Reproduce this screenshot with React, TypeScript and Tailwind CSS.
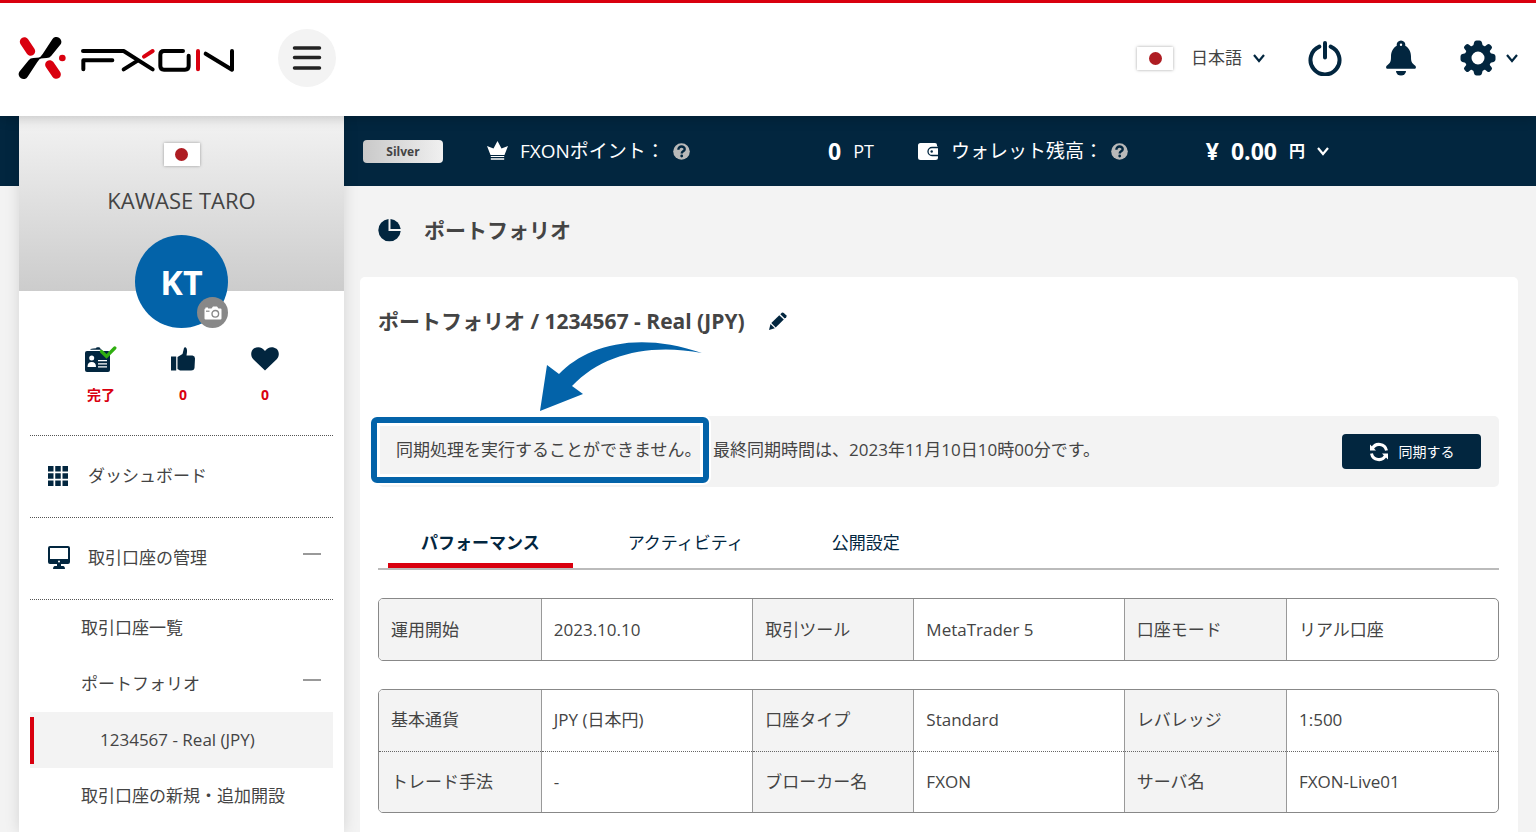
import { useState } from 'react';
import type { ReactNode } from 'react';

const Logo = () => (
  <svg viewBox="54 108 651 132" className="h-11 w-[217px]" aria-hidden="true">
    <g stroke="#d9000f" strokeWidth="27" strokeLinecap="round">
      <path d="M73 125L92 154M149 194L169 223" />
    </g>
    <circle cx="187" cy="174" r="10" fill="#d9000f" />
    <path
      id="logo-wing"
      d="M157 118L128 162Q122 172 112 176L140 174Q149 174 154 167L182 133A14 14 0 0 0 157 118Z"
    />
    <use href="#logo-wing" transform="rotate(180 120 174)" />
    <g fill="none" stroke="#000" strokeWidth="12" strokeLinecap="round" strokeLinejoin="round">
      <path d="M249 153H371L458 208M250 208V181H337M371 208L413 182" />
      <path d="M549 153H492Q481 153 481 164V198Q481 209 492 209H555Q566 209 566 198V167" />
      <path d="M617 161L696 209V153" />
      <path d="M594 153V208M432 170L458 153" stroke="#d9000f" />
    </g>
  </svg>
);

const Flag = () => (
  <span className="flex h-[23px] w-9 shrink-0 items-center justify-center bg-white shadow-[0_0_3px_rgba(0,0,0,0.35)]">
    <span className="size-[13px] rounded-full bg-[#ae1c22]" />
  </span>
);

const Chevron = () => (
  <svg viewBox="0 0 12 12" className="size-3 shrink-0" fill="none" stroke="currentColor" strokeWidth="2.2" aria-hidden="true">
    <path d="M1 3L6 9L11 3" />
  </svg>
);

const PowerIcon = () => (
  <svg viewBox="0 0 34 36" className="h-9 w-[34px]" fill="none" stroke="currentColor" strokeWidth="4" strokeLinecap="round" aria-hidden="true">
    <path d="M17 3V17.5M11.3 6.6A14.5 14.5 0 1 0 22.7 6.6" />
  </svg>
);

const BellIcon = () => (
  <svg viewBox="0 0 30 36" className="h-9 w-[30px]" fill="currentColor" aria-hidden="true">
    <path
      fillRule="evenodd"
      d="M15 .5a4.300 4.300 0 0 0-4.200 5.200C7.300 7.500 5 11.500 5 16.500c0 5-.6 6.500-4.300 9.200-1 .8-.7 3 .3 3h28c1 0 1.300-2.200.3-3C25.600 23 25 21.500 25 16.500c0-5-2.300-9-5.800-10.800A4.300 4.300 0 0 0 15 .5zm0 3a1.200 1.200 0 1 1 0 2.400 1.200 1.200 0 0 1 0-2.400z"
    />
    <path d="M10 31h10a5 4.500 0 0 1-10 0z" />
  </svg>
);

const GearIcon = () => (
  <svg viewBox="-18 -18 36 36" className="size-9" aria-hidden="true">
    <circle r="10" fill="none" stroke="currentColor" strokeWidth="7" />
    <g fill="none" stroke="currentColor" strokeWidth="5" strokeLinejoin="round">
      <path d="M-1.500-15H1.500L2.500-11H-2.500ZM-1.500 15H1.500L2.500 11H-2.500ZM-15-1.500V1.500L-11 2.500V-2.500ZM15-1.500V1.500L11 2.500V-2.500Z" />
      <path d="M-12-10.500L-10.500-12L-8-10L-10-8ZM12-10.500L10.500-12L8-10L10-8ZM-12 10.500L-10.500 12L-8 10L-10 8ZM12 10.500L10.500 12L8 10L10 8Z" strokeWidth="4" />
    </g>
  </svg>
);

const CrownIcon = () => (
  <svg viewBox="0 0 21 20" className="h-5 w-[21px]" fill="currentColor" aria-hidden="true">
    <path d="M10.500 0L14.500 7.500L21 5L17.500 14H3.500L0 5L6.500 7.500Z" />
    <path d="M3.800 15H17.200V16H3.800ZM3.800 17.300H17.200V18.800H3.800Z" />
  </svg>
);

const HelpIcon = () => (
  <svg viewBox="0 0 17 17" className="size-[17px]" aria-hidden="true">
    <circle cx="8.500" cy="8.500" r="8.300" fill="#b9b9b9" />
    <path d="M5.400 6.700C5.200 2.500 11.800 2.600 11.700 6.200C11.600 8.500 8.700 8.200 8.700 10.500" fill="none" stroke="#02263f" strokeWidth="2.400" />
    <circle cx="8.700" cy="13" r="1.400" fill="#02263f" />
  </svg>
);

const WalletIcon = () => (
  <svg viewBox="0 0 21 17" className="h-[17px] w-[21px]" aria-hidden="true">
    <path d="M2.500 0H17Q19 0 19 2V3.500H20V14.500Q20 17 17.500 17H2.500Q0 17 0 14.500V2.500Q0 0 2.500 0Z" fill="#fff" />
    <path d="M20 4.500H14A4 4 0 0 0 14 12.500H20" fill="#fff" stroke="#02263f" strokeWidth="1.300" />
    <circle cx="13.700" cy="8.500" r="1.200" fill="#02263f" />
  </svg>
);

const PieIcon = () => (
  <svg viewBox="0 0 24 24" className="size-6" fill="currentColor" aria-hidden="true">
    <path d="M10.500 1V13H22.700A11.200 11.200 0 1 1 10.500 1Z" />
    <path d="M12.500 1A11.200 11.200 0 0 1 22.700 11H12.500Z" />
  </svg>
);

const PencilIcon = () => (
  <svg viewBox="0 0 18 18" className="size-[18px]" fill="currentColor" aria-hidden="true">
    <path d="M12.800.8Q13.800 0 14.800.9L17.200 3.300Q18 4.300 17.200 5.200L15.700 6.600L11.300 2.300Z" />
    <path d="M10.300 3.200L14.800 7.600L6.700 15.400L2.300 11Z" />
    <path d="M1.500 12L5.800 16.300L0 18Z" />
  </svg>
);

const SyncIcon = () => (
  <svg viewBox="0 0 20 20" className="size-5" fill="none" stroke="currentColor" strokeWidth="3" aria-hidden="true">
    <path d="M3.300 6.800A7.500 7.500 0 0 1 17.500 8.500M16.700 13.200A7.500 7.500 0 0 1 2.500 11.500" />
    <path d="M1 2.500V8.500H7ZM19 17.500V11.500H13Z" fill="currentColor" stroke="none" />
  </svg>
);

const GridIcon = () => (
  <svg viewBox="0 0 20 20" className="size-5" fill="none" stroke="currentColor" strokeWidth="5.500" strokeDasharray="5.500 1.750" aria-hidden="true">
    <path d="M0 2.750H20M0 10H20M0 17.250H20" />
  </svg>
);

const MonitorIcon = () => (
  <svg viewBox="0 0 22 23" className="h-[23px] w-[22px]" fill="currentColor" aria-hidden="true">
    <path
      fillRule="evenodd"
      d="M2 0H20Q22 0 22 2V16Q22 18 20 18H13V20H15.500Q17 20.500 17 23H5Q5 20.500 6.500 20H9V18H2Q0 18 0 16V2Q0 0 2 0ZM2 2V13H20V2ZM11 14.500A1 1 0 1 0 11 16.500A1 1 0 1 0 11 14.500Z"
    />
  </svg>
);

const IdIcon = () => (
  <svg viewBox="0 0 32 28" className="h-7 w-8" aria-hidden="true">
    <path d="M5.500 4.700V4Q8 3.400 11 3.200Q11 2.200 12.500 2.200H14Q15 2.200 15 3.200L17 4.700Z" fill="#02263f" />
    <rect y="6" width="25" height="21" rx="2" fill="#02263f" />
    <circle cx="6.700" cy="13" r="2.500" fill="#fff" />
    <path d="M2.500 22Q2.500 17 6.700 17Q11 17 11 22ZM13 15H22V16.300H13ZM13 18.300H22V19.600H13ZM13 21.300H22V22.600H13Z" fill="#fff" />
    <path d="M16.500 6.500L21.500 11.500L29.800 3" fill="none" stroke="#2fae10" strokeWidth="3.300" strokeLinecap="round" />
  </svg>
);

const ThumbIcon = () => (
  <svg viewBox="0 0 24 24" className="size-6" fill="currentColor" aria-hidden="true">
    <path d="M0 9.500H5.200V23.500H0ZM6.500 10L11.500 7L13 1Q13.500 0 14.500.2Q17 1.500 15.500 8.500H21.500Q24 8.800 24 11.500L23.500 21Q23 23.500 20 23.500H9L6.500 22Z" />
  </svg>
);

const HeartIcon = () => (
  <svg viewBox="0 0 28 24" className="h-6 w-7" fill="currentColor" aria-hidden="true">
    <path d="M14 23.500L2.300 12.300C-1 8.700 0 4 2.500 1.800C6-.900 11.300-.3 14 4C16.700-.3 22-.900 25.500 1.800C28 4 29 8.700 25.700 12.300Z" />
  </svg>
);

const CameraIcon = () => (
  <svg viewBox="0 0 18 14" className="h-[14px] w-[18px]" aria-hidden="true">
    <path d="M1.500 2.500V1.500H4V2.500H7.500L9 .5H13L14.500 2.500H16.500Q17.500 2.500 17.500 3.500V12.500Q17.500 13.500 16.500 13.500H1.500Q.5 13.500 .5 12.500V3.500Q.5 2.500 1.500 2.500Z" fill="#fff" />
    <circle cx="11.300" cy="7.800" r="3.300" fill="none" stroke="#888" strokeWidth="1.400" />
    <path d="M2 5.200H5.500" stroke="#888" strokeWidth="1.200" />
  </svg>
);

const Minus = () => <span className="mb-2 ml-auto h-[2px] w-[18px] bg-[#999]" />;

const stats = [
  { label: '完了', icon: <IdIcon /> },
  { label: '0', icon: <ThumbIcon /> },
  { label: '0', icon: <HeartIcon /> },
];

const tabs = ['パフォーマンス', 'アクティビティ', '公開設定'];

const accountRows = [['運用開始', '2023.10.10', '取引ツール', 'MetaTrader 5', '口座モード', 'リアル口座']];

const detailRows = [
  ['基本通貨', 'JPY (日本円)', '口座タイプ', 'Standard', 'レバレッジ', '1:500'],
  ['トレード手法', '-', 'ブローカー名', 'FXON', 'サーバ名', 'FXON-Live01'],
];

const NavItem = ({ icon, children, open }: { icon: ReactNode; children: ReactNode; open?: boolean }) => (
  <a href="#" className="flex h-[82px] items-center border-t border-dotted border-[#555] pr-3 pb-[2px] pl-[18px]">
    <span className="w-10 text-[#02263f]">{icon}</span>
    <span>{children}</span>
    {open && <Minus />}
  </a>
);

const InfoTable = ({ rows }: { rows: string[][] }) => (
  <div className="mt-7 overflow-hidden rounded-[5px] border border-[#888]">
    <table className="w-full table-fixed border-collapse text-left">
      <colgroup>
        <col className="w-[14.5%]" />
        <col className="w-[18.9%]" />
        <col className="w-[14.4%]" />
        <col className="w-[18.8%]" />
        <col className="w-[14.5%]" />
        <col className="w-[18.9%]" />
      </colgroup>
      <tbody className="divide-y divide-dotted divide-[#666]">
        {rows.map((row) => (
          <tr key={row[0]}>
            {row.map((cell, i) =>
              i % 2 === 0 ? (
                <th key={i} scope="row" className="h-[61px] border-r border-solid border-r-[#999] bg-[#f3f3f3] pl-3 font-[390]">
                  {cell}
                </th>
              ) : (
                <td key={i} className="h-[61px] border-r border-solid border-r-[#999] pl-3 last:border-r-0">
                  {cell}
                </td>
              )
            )}
          </tr>
        ))}
      </tbody>
    </table>
  </div>
);

const Header = () => (
  <header className="relative z-10 flex h-[116px] items-center justify-between border-t-[3px] border-[#d9000f] bg-white pr-[18px] pb-[3px] pl-[18px] text-[#02263f] shadow-[0_2px_12px_rgba(0,0,0,0.2)]">
    <div className="flex items-center gap-[43px]">
      <a href="#" aria-label="FXON">
        <Logo />
      </a>
      <button type="button" aria-label="メニュー" className="flex size-[58px] items-center justify-center rounded-full bg-[#f3f3f3]">
        <svg viewBox="0 0 30 26" className="h-[26px] w-[30px]" stroke="#222" strokeWidth="3.500" strokeLinecap="round">
          <path d="M2.500 3H27.500M2.500 12.500H27.500M2.500 23H27.500" />
        </svg>
      </button>
    </div>
    <div className="flex items-center">
      <label className="flex items-center">
        <Flag />
        <select aria-label="言語" className="ml-[18px] w-[62px] appearance-none bg-transparent font-[390] text-[#444]">
          <option>日本語</option>
        </select>
        <Chevron />
      </label>
      <button type="button" aria-label="ログアウト" className="ml-[43px]">
        <PowerIcon />
      </button>
      <button type="button" aria-label="お知らせ" className="ml-[44px]">
        <BellIcon />
      </button>
      <button type="button" aria-label="設定" className="ml-[44px] flex items-center gap-[10px]">
        <GearIcon />
        <Chevron />
      </button>
    </div>
  </header>
);

const Sidebar = () => (
  <aside className="ml-[19px] w-[325px] shrink-0 bg-white shadow-[0_0_14px_rgba(0,0,0,0.13)]">
    <div className="flex h-[175px] flex-col items-center bg-linear-to-b from-[#f3f3f3] to-[#cccccc] pt-[27px]">
      <Flag />
      <p className="mt-5 text-[22px] leading-7">KAWASE TARO</p>
      <div className="relative mt-[21px] flex size-[93px] shrink-0 items-center justify-center rounded-full bg-[#0363a9] text-[34px] font-bold text-white">
        KT
        <button
          type="button"
          aria-label="写真を変更"
          className="absolute right-0 bottom-0 flex size-[31px] items-center justify-center rounded-full bg-[#888]"
        >
          <CameraIcon />
        </button>
      </div>
    </div>
    <ul className="ml-[41px] grid w-[246px] grid-cols-3 pt-[54px] pb-7 text-[#02263f]">
      {stats.map((stat, i) => (
        <li key={i} className="flex flex-col items-center gap-[10px]">
          <span className="flex h-7 items-center">{stat.icon}</span>
          <span className="text-sm leading-6 font-bold text-[#d9000f]">{stat.label}</span>
        </li>
      ))}
    </ul>
    <nav className="mx-[11px]">
      <NavItem icon={<GridIcon />}>ダッシュボード</NavItem>
      <NavItem icon={<MonitorIcon />} open>
        取引口座の管理
      </NavItem>
      <div className="border-t border-dotted border-[#555]">
        <a href="#" className="flex h-14 items-center pl-[51px]">
          取引口座一覧
        </a>
        <a href="#" className="flex h-14 items-center pr-3 pl-[51px]">
          ポートフォリオ
          <Minus />
        </a>
        <a href="#" className="flex h-14 items-center bg-[#f3f3f3]">
          <span className="h-[47px] w-1 bg-[#d9000f]" />
          <span className="pl-[66px]">1234567 - Real (JPY)</span>
        </a>
        <a href="#" className="flex h-14 items-center pl-[51px]">
          取引口座の新規・追加開設
        </a>
      </div>
    </nav>
  </aside>
);

const AccountBar = () => (
  <div className="flex h-[70px] items-center pl-[19px] text-[19px] text-white">
    <span className="w-20 rounded-sm bg-linear-to-r from-[#c9c9c9] via-[#dcdcdc] to-[#f0f0f0] text-center text-xs leading-[23px] font-bold text-[#444]">
      Silver
    </span>
    <div className="ml-11 flex w-[387px] items-center">
      <CrownIcon />
      <span className="ml-3">FXONポイント：</span>
      <button type="button" aria-label="ポイントについて" className="ml-2">
        <HelpIcon />
      </button>
      <span className="ml-auto text-[23px] font-bold">0</span>
      <span className="ml-3 text-lg">PT</span>
    </div>
    <div className="ml-11 flex w-[411px] items-center">
      <WalletIcon />
      <span className="ml-3">ウォレット残高：</span>
      <button type="button" aria-label="ウォレット残高について" className="ml-2">
        <HelpIcon />
      </button>
      <button type="button" className="ml-auto flex items-center gap-3 font-bold">
        <span className="text-[23px]">¥</span>
        <span className="text-[23px]">0.00</span>
        <span className="text-base">円</span>
        <Chevron />
      </button>
    </div>
  </div>
);

const SyncNotice = () => (
  <div className="mt-[79px] flex h-[71px] items-center rounded-[5px] bg-[#f3f3f3] px-[18px]">
    <p className="relative mb-1 w-[317px] leading-6 whitespace-nowrap">
      同期処理を実行することができません。
      <span className="absolute -top-[21px] -left-[25px] h-[66px] w-[338px] rounded-md border-[6px] border-[#0363a9] shadow-[0_0_0_2px_#fff,inset_0_0_0_3px_#fff]" />
      <svg viewBox="0 0 164 72" className="absolute -top-[98px] left-36 h-[72px] w-[164px]" fill="#0363a9" aria-hidden="true">
        <path d="M0 71L7 25L19 34C45 7 95-10 162 13C110 3 62 14 32 46L43 54Z" />
      </svg>
    </p>
    <p className="mb-1 leading-6">最終同期時間は、2023年11月10日10時00分です。</p>
    <button type="button" className="ml-auto flex h-[35px] w-[139px] items-center justify-center gap-[10px] rounded-sm bg-[#02263f] text-sm text-white">
      <SyncIcon />
      同期する
    </button>
  </div>
);

const App = () => {
  const [activeTab, setActiveTab] = useState(0);

  return (
    <div className="flex min-h-screen flex-col bg-[#f3f3f3] font-['Open_Sans','Noto_Sans_CJK_JP',sans-serif] text-[17px] leading-6 font-[390] text-[#444]">
      <Header />
      <div className="flex flex-1 bg-[linear-gradient(#02263f_70px,#f3f3f3_70px)]">
        <Sidebar />
        <main className="flex min-w-0 flex-1 flex-col">
          <AccountBar />
          <h1 className="flex h-[91px] items-center gap-[22px] pb-[3px] pl-[34px] text-[21px] font-bold">
            <span className="text-[#02263f]">
              <PieIcon />
            </span>
            ポートフォリオ
          </h1>
          <section className="mr-[18px] ml-4 flex-1 rounded-t-[5px] bg-white pt-7 pr-[19px] pl-[18px]">
            <h2 className="flex items-center gap-6 text-[21px] leading-8 font-bold">
              ポートフォリオ / 1234567 - Real (JPY)
              <button type="button" aria-label="編集" className="text-[#02263f]">
                <PencilIcon />
              </button>
            </h2>
            <SyncNotice />
            <div role="tablist" className="mt-9 flex gap-[22px] border-b-2 border-[#bbb] pl-[10px] text-[#02263f]">
              {tabs.map((tab, i) => (
                <button
                  key={tab}
                  type="button"
                  role="tab"
                  aria-selected={activeTab === i}
                  onClick={() => setActiveTab(i)}
                  className={
                    activeTab === i
                      ? 'border-b-[5px] border-[#d9000f] px-[33px] leading-10 font-bold'
                      : 'border-b-[5px] border-transparent px-[33px] leading-10'
                  }
                >
                  {tab}
                </button>
              ))}
            </div>
            <InfoTable rows={accountRows} />
            <InfoTable rows={detailRows} />
          </section>
        </main>
      </div>
    </div>
  );
};

export default App;
